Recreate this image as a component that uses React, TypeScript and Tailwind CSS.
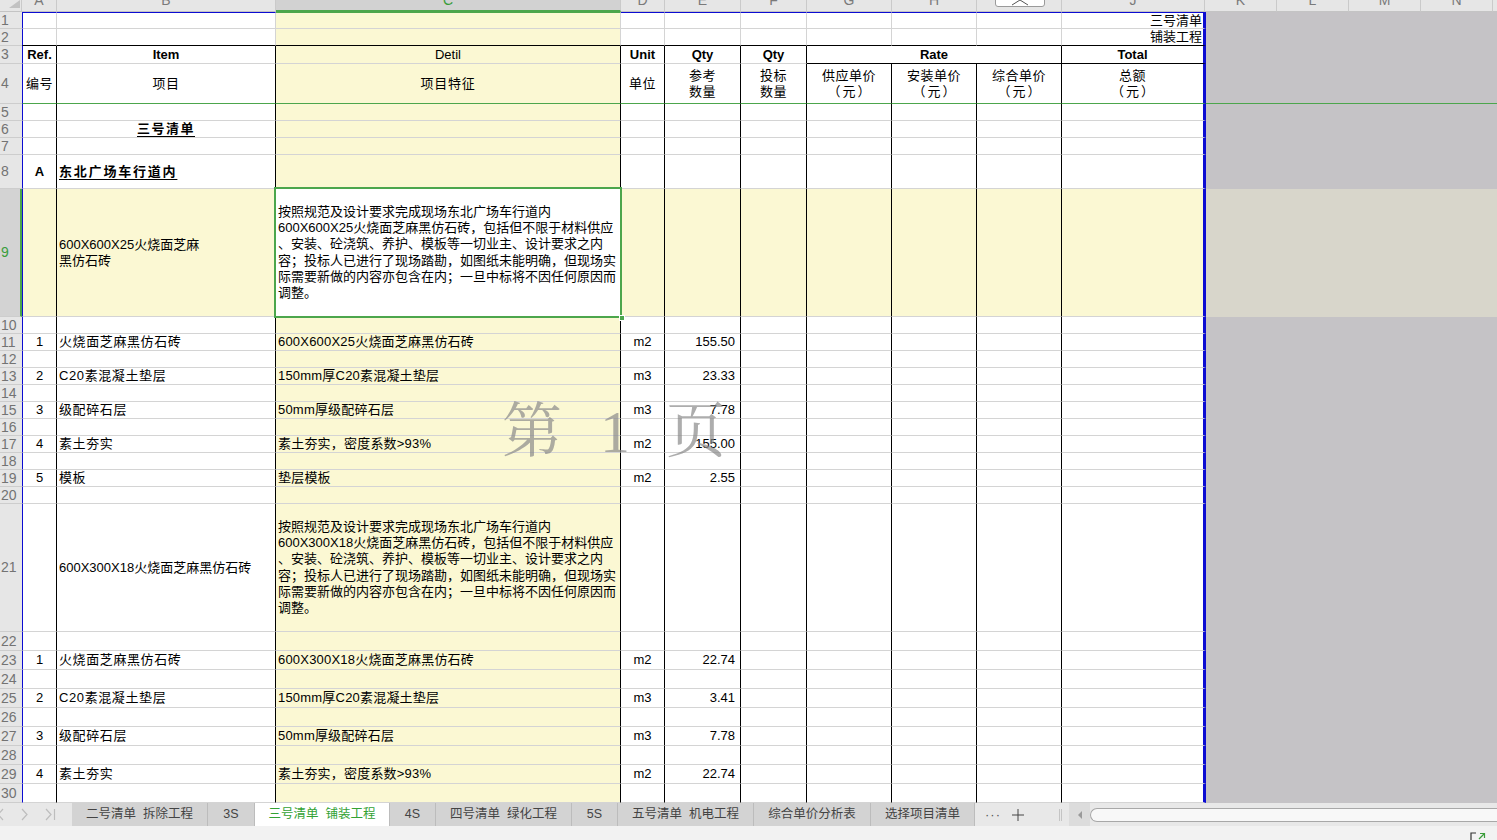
import React from 'react';

type Col = 'A' | 'B' | 'C' | 'D' | 'E' | 'F' | 'G' | 'H' | 'I' | 'J';
const COLS: Col[] = ['A', 'B', 'C', 'D', 'E', 'F', 'G', 'H', 'I', 'J'];

const WIDTH: Record<Col, string> = {
  A: 'w-[35px] border-l border-l-[#0c0cd2]',
  B: 'w-[219px]',
  C: 'w-[345px]',
  D: 'w-[44px]',
  E: 'w-[76px]',
  F: 'w-[66px]',
  G: 'w-[85px]',
  H: 'w-[85px]',
  I: 'w-[85px]',
  J: 'w-[144px]',
};

type Align = 'l' | 'c' | 'r' | 'rr';
interface CellData {
  t: React.ReactNode;
  a?: Align;
  b?: boolean;
  u?: boolean;
  tr?: string;
}

const ALIGN: Record<Align, string> = {
  l: 'justify-start pl-[2px] text-left',
  c: 'justify-center text-center',
  r: 'justify-end pr-[5px] text-right',
  rr: 'justify-end pr-[1px] text-right',
};

interface RowDef {
  n: number;
  h: string;
  cells: Partial<Record<Col, CellData>>;
}

const rb = (r: number, c: Col) => {
  if (c === 'J') return 'border-r-[3px] border-r-[#0c0cd2]';
  if (r >= 3 && (c === 'A' || c === 'B' || c === 'C' || c === 'D' || c === 'E' || c === 'F' || c === 'I'))
    return 'border-r border-r-black';
  if (r >= 4 && (c === 'G' || c === 'H')) return 'border-r border-r-black';
  return 'border-r border-r-[#d4d4d4]';
};

const bb = (r: number, c: Col) => {
  if (r === 2) return 'border-b border-b-black';
  if (r === 3 && (c === 'G' || c === 'H' || c === 'I' || c === 'J')) return 'border-b border-b-black';
  if (r === 4) return 'border-b border-b-[#4ca64c]';
  return 'border-b border-b-[#d4d4d4]';
};

const bg = (r: number, c: Col) => {
  if (r === 9 && c === 'C') return 'bg-white';
  if (c === 'C' || r === 9) return 'bg-[#fbf8d3]';
  return 'bg-white';
};

const two = (a: string, b: string) => (
  <div className="leading-[16px] tracking-[0.5px]">
    <div>{a}</div>
    <div>{b}</div>
  </div>
);

const yuan = (a: string) => (
  <div className="leading-[16px]">
    <div className="tracking-[0.5px]">{a}</div>
    <div className="flex justify-center gap-[2px]">
      <span>（</span>
      <span>元</span>
      <span>）</span>
    </div>
  </div>
);

const Desc = ({ lines }: { lines: string[] }) => (
  <div className="leading-[16.2px] whitespace-nowrap text-left">
    {lines.map((l, i) => (
      <div key={i}>{l}</div>
    ))}
  </div>
);

const desc1 = [
  '按照规范及设计要求完成现场东北广场车行道内',
  '600X600X25火烧面芝麻黑仿石砖，包括但不限于材料供应',
  '、安装、砼浇筑、养护、模板等一切业主、设计要求之内',
  '容；投标人已进行了现场踏勘，如图纸未能明确，但现场实',
  '际需要新做的内容亦包含在内；一旦中标将不因任何原因而',
  '调整。',
];
const desc2 = [
  '按照规范及设计要求完成现场东北广场车行道内',
  '600X300X18火烧面芝麻黑仿石砖，包括但不限于材料供应',
  '、安装、砼浇筑、养护、模板等一切业主、设计要求之内',
  '容；投标人已进行了现场踏勘，如图纸未能明确，但现场实',
  '际需要新做的内容亦包含在内；一旦中标将不因任何原因而',
  '调整。',
];

const items1 = [
  ['1', '火烧面芝麻黑仿石砖', '600X600X25火烧面芝麻黑仿石砖', 'm2', '155.50'],
  ['2', 'C20素混凝土垫层', '150mm厚C20素混凝土垫层', 'm3', '23.33'],
  ['3', '级配碎石层', '50mm厚级配碎石层', 'm3', '7.78'],
  ['4', '素土夯实', '素土夯实，密度系数>93%', 'm2', '155.00'],
  ['5', '模板', '垫层模板', 'm2', '2.55'],
];
const items2 = [
  ['1', '火烧面芝麻黑仿石砖', '600X300X18火烧面芝麻黑仿石砖', 'm2', '22.74'],
  ['2', 'C20素混凝土垫层', '150mm厚C20素混凝土垫层', 'm3', '3.41'],
  ['3', '级配碎石层', '50mm厚级配碎石层', 'm3', '7.78'],
  ['4', '素土夯实', '素土夯实，密度系数>93%', 'm2', '22.74'],
];

const itemCells = (it: string[]): Partial<Record<Col, CellData>> => ({
  A: { t: it[0], a: 'c' },
  B: { t: it[1], a: 'l', tr: 'tracking-[0.6px]' },
  C: { t: it[2], a: 'l', tr: 'tracking-[0.2px]' },
  D: { t: it[3], a: 'c' },
  E: { t: it[4], a: 'r' },
});

const buildRows = (): RowDef[] => {
  const rows: RowDef[] = [
    { n: 1, h: 'h-[17px]', cells: { J: { t: '三号清单', a: 'rr' } } },
    { n: 2, h: 'h-[17px]', cells: { J: { t: '铺装工程', a: 'rr' } } },
    {
      n: 3,
      h: 'h-[18px]',
      cells: {
        A: { t: 'Ref.', a: 'c', b: true },
        B: { t: 'Item', a: 'c', b: true },
        C: { t: 'Detil', a: 'c' },
        D: { t: 'Unit', a: 'c', b: true },
        E: { t: 'Qty', a: 'c', b: true },
        F: { t: 'Qty', a: 'c', b: true },
        J: { t: 'Total', a: 'c', b: true },
      },
    },
    {
      n: 4,
      h: 'h-[40px]',
      cells: {
        A: { t: '编号', a: 'c', tr: 'tracking-[0.5px]' },
        B: { t: '项目', a: 'c', tr: 'tracking-[0.5px]' },
        C: { t: '项目特征', a: 'c', tr: 'tracking-[0.8px]' },
        D: { t: '单位', a: 'c', tr: 'tracking-[0.5px]' },
        E: { t: two('参考', '数量'), a: 'c' },
        F: { t: two('投标', '数量'), a: 'c' },
        G: { t: yuan('供应单价'), a: 'c' },
        H: { t: yuan('安装单价'), a: 'c' },
        I: { t: yuan('综合单价'), a: 'c' },
        J: { t: yuan('总额'), a: 'c' },
      },
    },
    { n: 5, h: 'h-[17px]', cells: {} },
    { n: 6, h: 'h-[17px]', cells: { B: { t: '三号清单', a: 'c', b: true, u: true, tr: 'tracking-[1.5px]' } } },
    { n: 7, h: 'h-[17px]', cells: {} },
    {
      n: 8,
      h: 'h-[34px]',
      cells: {
        A: { t: 'A', a: 'c', b: true },
        B: { t: '东北广场车行道内', a: 'l', b: true, u: true, tr: 'tracking-[1.8px]' },
      },
    },
    {
      n: 9,
      h: 'h-[128px]',
      cells: {
        B: {
          t: (
            <div className="leading-[16px]">
              <div>600X600X25火烧面芝麻</div>
              <div>黑仿石砖</div>
            </div>
          ),
          a: 'l',
        },
        C: { t: <Desc lines={desc1} />, a: 'l' },
      },
    },
  ];
  for (let n = 10; n <= 20; n++) {
    rows.push({ n, h: 'h-[17px]', cells: n % 2 === 1 ? itemCells(items1[(n - 11) / 2]) : {} });
  }
  rows.push({
    n: 21,
    h: 'h-[128px]',
    cells: {
      B: { t: '600X300X18火烧面芝麻黑仿石砖', a: 'l' },
      C: { t: <Desc lines={desc2} />, a: 'l' },
    },
  });
  for (let n = 22; n <= 30; n++) {
    rows.push({ n, h: 'h-[19px]', cells: n % 2 === 1 ? itemCells(items2[(n - 23) / 2]) : {} });
  }
  return rows;
};

const ROWS = buildRows();

function Cell({ r, c, d }: { r: number; c: Col; d?: CellData }) {
  const sel = r === 9 && c === 'C';
  const top = r === 1 ? (c === 'C' ? 'border-t border-t-[#4ca64c]' : 'border-t border-t-[#0c0cd2]') : '';
  return (
    <div
      className={`shrink-0 flex items-center ${WIDTH[c]} ${rb(r, c)} ${bb(r, c)} ${bg(r, c)} ${top} ${
        d ? ALIGN[d.a ?? 'l'] : ''
      } ${sel ? 'relative' : 'overflow-hidden'}`}
    >
      {d && (
        <div
          className={`whitespace-nowrap leading-[16px] ${d.b ? 'font-bold' : ''} ${
            d.u ? 'underline underline-offset-[3px]' : ''
          } ${d.tr ?? ''}`}
        >
          {d.t}
        </div>
      )}
      {sel && (
        <>
          <div className="absolute -left-[2px] -top-[2px] -right-[2px] -bottom-[2px] border-2 border-[#4ca64c] z-10 pointer-events-none" />
          <div className="absolute -right-[5px] -bottom-[5px] w-[6px] h-[6px] bg-[#4ca64c] border border-white z-20" />
        </>
      )}
    </div>
  );
}

function Row({ def }: { def: RowDef }) {
  const sel = def.n === 9;
  return (
    <div className={`flex ${def.h}`}>
      <div
        className={`w-[22px] shrink-0 flex items-center pl-[1px] border-b border-b-[#cdcdcd] text-[14px] font-['Liberation_Sans_Narrow','Liberation_Sans',sans-serif] ${
          sel ? 'bg-[#d3d3d3] text-[#3a9d3a] border-r-2 border-r-[#4ca64c]' : 'bg-[#e6e6e6] text-[#737373]'
        }`}
      >
        {def.n}
      </div>
      {def.n === 3 ? (
        <>
          {(['A', 'B', 'C', 'D', 'E', 'F'] as Col[]).map((c) => (
            <Cell key={c} r={3} c={c} d={def.cells[c]} />
          ))}
          <div className="w-[255px] shrink-0 flex items-center justify-center border-r border-r-black border-b border-b-black bg-white font-bold leading-[16px]">
            Rate
          </div>
          <Cell r={3} c="J" d={def.cells.J} />
        </>
      ) : (
        COLS.map((c) => <Cell key={c} r={def.n} c={c} d={def.cells[c]} />)
      )}
      <div
        className={`flex-1 ${sel ? 'bg-[#d8d6cb]' : 'bg-[#c5c3c6]'} ${
          def.n === 4 ? 'border-b border-b-[#4ca64c]' : ''
        }`}
      />
    </div>
  );
}

const HEAD: { l: string; w: string }[] = [
  { l: 'A', w: 'w-[35px]' },
  { l: 'B', w: 'w-[219px]' },
  { l: 'C', w: 'w-[345px]' },
  { l: 'D', w: 'w-[44px]' },
  { l: 'E', w: 'w-[76px]' },
  { l: 'F', w: 'w-[66px]' },
  { l: 'G', w: 'w-[85px]' },
  { l: 'H', w: 'w-[85px]' },
  { l: 'I', w: 'w-[85px]' },
  { l: 'J', w: 'w-[143px]' },
  { l: 'K', w: 'w-[72px]' },
  { l: 'L', w: 'w-[72px]' },
  { l: 'M', w: 'w-[72px]' },
  { l: 'N', w: 'w-[72px]' },
];

const TABS: { label: string; w: string; active?: boolean }[] = [
  { label: '二号清单  拆除工程', w: 'w-[136px]' },
  { label: '3S', w: 'w-[47px]' },
  { label: '三号清单  铺装工程', w: 'w-[135px]', active: true },
  { label: '4S', w: 'w-[46px]' },
  { label: '四号清单  绿化工程', w: 'w-[136px]' },
  { label: '5S', w: 'w-[46px]' },
  { label: '五号清单  机电工程', w: 'w-[136px]' },
  { label: '综合单价分析表', w: 'w-[117px]' },
  { label: '选择项目清单', w: 'w-[104px]' },
];

export default function App() {
  return (
    <div className="relative w-[1497px] h-[840px] overflow-hidden bg-white text-[13px] text-black font-['Liberation_Sans','Noto_Sans_CJK_SC',sans-serif]">
      {/* column header */}
      <div className="flex h-[12px]">
        <div className="w-[22px] shrink-0 bg-[#e6e6e6] border-b border-b-[#c4c4c4] border-r border-r-[#cacaca] overflow-hidden">
          <svg width="21" height="11" viewBox="0 0 21 11">
            <polygon points="9,8 20,8 20,0" fill="#c2c2c2" />
          </svg>
        </div>
        {HEAD.map((h) => (
          <div
            key={h.l}
            className={`shrink-0 flex justify-center overflow-hidden border-r border-r-[#cacaca] text-[14px] ${h.w} ${
              h.l === 'C'
                ? 'bg-[#d2d2d2] text-[#3a9d3a] border-b-2 border-b-[#4ca64c]'
                : 'bg-[#e6e6e6] text-[#7a7a7a] border-b border-b-[#c4c4c4]'
            }`}
          >
            <div className="-mt-[7px] leading-[14px]">{h.l}</div>
          </div>
        ))}
        <div className="flex-1 bg-[#e6e6e6] border-b border-b-[#c4c4c4]" />
      </div>

      {/* sheet body */}
      {ROWS.map((r) => (
        <Row key={r.n} def={r} />
      ))}

      {/* sheet tabs */}
      <div className="flex h-[23px] bg-[#d3d3d3] text-[12.5px] text-[#444]">
        <div className="w-[72px] shrink-0 bg-[#e8e8e8]">
          <svg width="72" height="23" viewBox="0 0 72 23" fill="none" stroke="#bdbdbd" strokeWidth="1.2">
            <polyline points="3,6 -2,11.5 3,17" />
            <polyline points="22,6 27,11.5 22,17" />
            <polyline points="46,6 51,11.5 46,17" />
            <line x1="54.5" y1="6" x2="54.5" y2="17" />
          </svg>
        </div>
        {TABS.map((t) => (
          <div
            key={t.label}
            className={`shrink-0 flex items-center justify-center whitespace-pre border-r border-r-[#bcbcbc] ${t.w} ${
              t.active ? 'bg-white text-[#33a234]' : ''
            }`}
          >
            {t.label}
          </div>
        ))}
        <div className="w-[94px] shrink-0 bg-[#e8e8e8] flex items-center">
          <span className="ml-[10px] text-[#555] tracking-[1px] text-[13px] leading-none">···</span>
          <svg className="ml-[10px]" width="14" height="14" viewBox="0 0 14 14" stroke="#444" strokeWidth="1">
            <line x1="7" y1="1" x2="7" y2="13" />
            <line x1="1" y1="7" x2="13" y2="7" />
          </svg>
          <svg className="ml-[34px]" width="4" height="14" viewBox="0 0 4 14" stroke="#c4c4c4" strokeWidth="1">
            <line x1="0.5" y1="1" x2="0.5" y2="13" />
            <line x1="2.5" y1="1" x2="2.5" y2="13" />
          </svg>
        </div>
        <div className="w-[21px] shrink-0 bg-[#dcdcdc] flex items-center justify-center">
          <svg width="6" height="8" viewBox="0 0 6 8">
            <polygon points="5,0 1,4 5,8" fill="#9a9a9a" />
          </svg>
        </div>
        <div className="flex-1 bg-[#e8e8e8] flex items-center">
          <div className="w-full h-[14px] rounded-l-full border border-r-0 border-[#a8a8a8] bg-[#f8f8f8]" />
        </div>
      </div>

      {/* status bar */}
      <div className="h-[14px] bg-[#f2f2f2] flex justify-end items-end">
        <svg className="mr-[11px]" width="16" height="8" viewBox="0 0 16 8" fill="none" strokeWidth="1.2">
          <polyline points="1,8 1,1 6,1" stroke="#333" />
          <line x1="9" y1="7" x2="14" y2="2" stroke="#3a9d3a" />
          <polyline points="10,1.5 14.5,1.5 14.5,6" stroke="#3a9d3a" />
        </svg>
      </div>

      {/* ribbon collapse button */}
      <div className="absolute left-[995px] -top-[4px] w-[50px] h-[11px] bg-white border border-[#9a9a9a] rounded-[3px] flex justify-center">
        <svg width="24" height="10" viewBox="0 0 24 10" fill="none" stroke="#555" strokeWidth="1">
          <polyline points="4,8 12,3 20,8" />
        </svg>
      </div>

      {/* page watermark */}
      <div className="absolute left-[502px] top-[402px] flex items-center text-[60px] leading-none text-[#8a8a8a]/70 font-['Liberation_Serif','Noto_Serif_CJK_SC','Noto_Sans_CJK_SC',serif] pointer-events-none">
        <span>第</span>
        <span className="ml-[38px]">1</span>
        <span className="ml-[36px]">页</span>
      </div>
    </div>
  );
}
